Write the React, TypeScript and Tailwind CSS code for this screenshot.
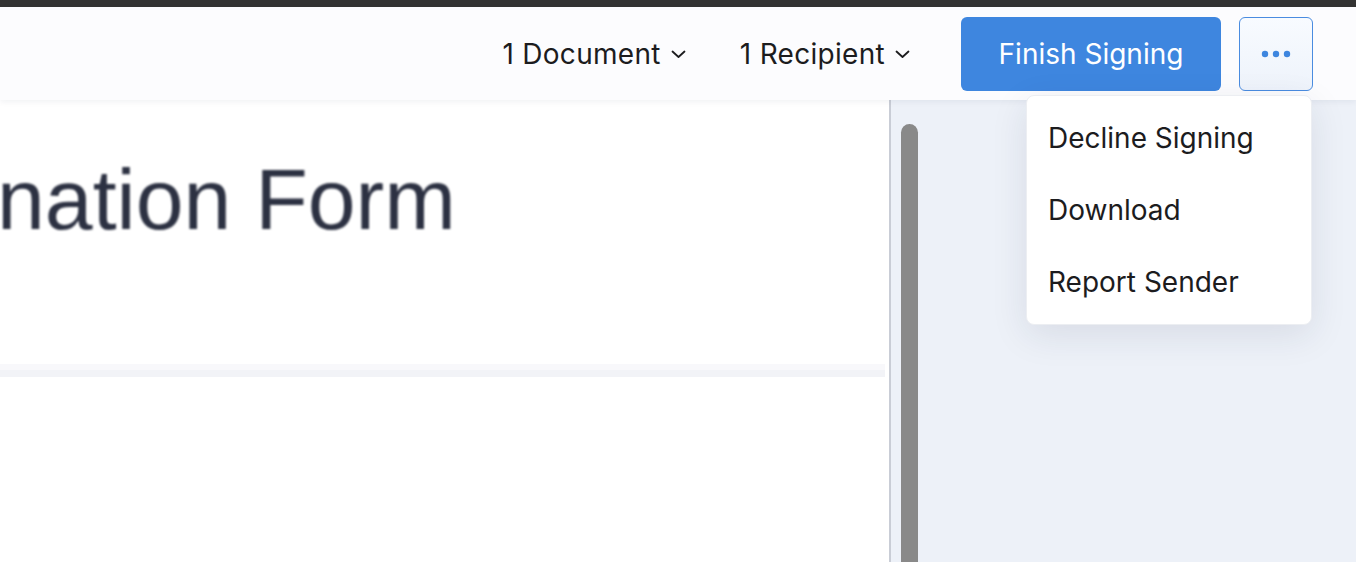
import React from "react"

const menuItems = ["Decline Signing", "Download", "Report Sender"]

function Chevron() {
    return (
        <svg width="15" height="9" viewBox="0 0 15 9" fill="none" className="ml-[10px] mt-[1px]">
            <polyline points="1.5,1.5 7.5,7 13.5,1.5" stroke="#1c1c1e" strokeWidth="1.8" strokeLinecap="round" strokeLinejoin="round" />
        </svg>
    )
}

function HeaderDropdown({ label, className }: { label: string; className?: string }) {
    return (
        <button className={"flex items-center text-[28px] tracking-[0.3px] text-[#1c1c1e] " + (className ?? "")}>
            {label}
            <Chevron />
        </button>
    )
}

export default function App() {
    return (
        <div className="relative flex h-screen w-full flex-col overflow-hidden font-['Inter','Noto_Sans',sans-serif]">
            <div className="h-[7px] shrink-0 bg-[#333333]" />

            <header className="relative z-10 flex h-[93px] shrink-0 items-center justify-end bg-[#fcfcfe] pr-[43px] shadow-[0_2px_6px_rgba(20,30,60,0.06)]">
                <HeaderDropdown label="1 Document" />
                <HeaderDropdown label="1 Recipient" className="ml-[54px]" />
                <button className="ml-[51px] h-[74px] w-[260px] rounded-[6px] bg-[#3e86df] text-[28px] text-white">
                    Finish Signing
                </button>
                <button className="ml-[18px] flex h-[74px] w-[74px] items-center justify-center rounded-[6px] border-[1.5px] border-[#4a8ce0] bg-gradient-to-b from-[#f8fbff] to-[#eef3fb]">
                    <svg width="30" height="8" viewBox="0 0 30 8">
                        <circle cx="4" cy="4" r="3.2" fill="#3e86df" />
                        <circle cx="15" cy="4" r="3.2" fill="#3e86df" />
                        <circle cx="26" cy="4" r="3.2" fill="#3e86df" />
                    </svg>
                </button>
            </header>

            <div className="flex min-h-0 flex-1">
                {/* document page */}
                <div className="w-[889px] shrink-0 overflow-hidden bg-white">
                    <div className="mt-[56px] -ml-[3px] whitespace-nowrap font-['Liberation_Sans',Arial,sans-serif] text-[86px] leading-none text-[#2c3142] blur-[0.8px]">
                        nation Form
                    </div>
                    <div className="mt-[122px] w-[885px]">
                        <div className="h-[6px] bg-[#f8f8fb]" />
                        <div className="h-[7px] bg-[#f2f3f7]" />
                    </div>
                </div>
                <div className="w-[2px] shrink-0 bg-[#c9cdd6]" />

                {/* viewer background with scrollbar */}
                <div className="flex flex-1 bg-[#edf1f8]">
                    <div className="ml-[10px] mt-[24px] w-[17px] rounded-t-full bg-[#898989]" />
                </div>
            </div>

            {/* more-actions menu */}
            <div className="absolute right-[44px] top-[95px] z-20 w-[286px] rounded-[8px] border border-[#eceef2] bg-white py-[6px] shadow-[0_10px_36px_rgba(30,40,70,0.10)]">
                {menuItems.map((item) => (
                    <div key={item} className="flex h-[72px] items-center pl-[21px] text-[28px] text-[#1c1c1e]">
                        {item}
                    </div>
                ))}
            </div>
        </div>
    )
}
